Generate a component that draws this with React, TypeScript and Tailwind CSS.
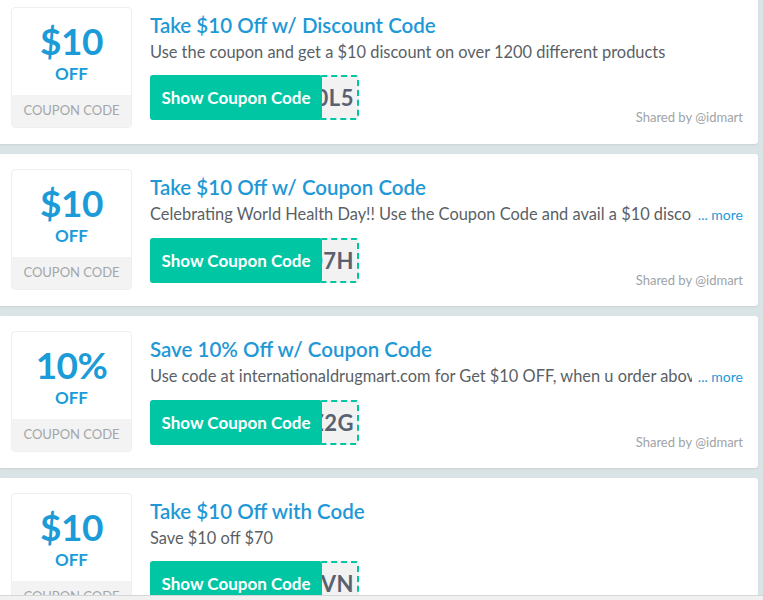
const coupons = [
  {
    value: "$10",
    title: "Take $10 Off w/ Discount Code",
    desc: "Use the coupon and get a $10 discount on over 1200 different products",
    more: false,
    code: "IDMART0L5",
  },
  {
    value: "$10",
    title: "Take $10 Off w/ Coupon Code",
    desc: "Celebrating World Health Day!! Use the Coupon Code and avail a $10 discount on all orders placed today",
    more: true,
    code: "HEALTH07H",
  },
  {
    value: "10%",
    title: "Save 10% Off w/ Coupon Code",
    desc: "Use code at internationaldrugmart.com for Get $10 OFF, when u order above $100 on any product",
    more: true,
    code: "IDM10Z2G",
  },
  {
    value: "$10",
    title: "Take $10 Off with Code",
    desc: "Save $10 off $70",
    more: false,
    code: "SAVE10ZVN",
  },
];

function CouponCard({ c }: { c: (typeof coupons)[number] }) {
  return (
    <div className="flex bg-white rounded-r-[3px] shadow-[0_1px_2px_rgba(0,0,0,0.08)] pl-[11px] pr-[15px] pt-[15px] pb-[16px]">
      {/* value badge */}
      <div className="w-[121px] h-[121px] shrink-0 border border-[#efefef] rounded-[4px] overflow-hidden flex flex-col">
        <div className="h-[87px] flex flex-col items-center pt-[14px] text-[#1b9bd8]">
          <span className="text-[37px] font-bold leading-[38px] tracking-[-0.5px]">{c.value}</span>
          <span className="text-[17px] font-bold leading-[20px] mt-[4px]">OFF</span>
        </div>
        <div className="flex-1 bg-[#f3f3f3] flex items-center justify-center text-[13px] text-[#a3a7aa]">
          COUPON CODE
        </div>
      </div>

      <div className="ml-[18px] flex-1 min-w-0 flex flex-col">
        <h2 className="text-[20.5px] font-semibold text-[#1f98d6] leading-[24px] mt-[6px]">{c.title}</h2>
        <div className="flex items-baseline mt-[4px] text-[16.4px] leading-[22px]">
          <span className="text-[#5a5f66] whitespace-nowrap overflow-hidden">{c.desc}</span>
          {c.more && (
            <span className="shrink-0 ml-[6px] text-[14px] text-[#1f98d6]">... more</span>
          )}
        </div>
        <div className="flex items-end justify-between mt-[12px]">
          <div className="relative w-[209px] h-[45px]">
            <div className="absolute inset-0 border-2 border-dashed border-[#00c6a4] rounded-[3px] bg-[#f2f2f2] flex items-center justify-end pr-[3px] overflow-hidden">
              <span className="text-[22px] font-bold text-[#596170] whitespace-nowrap tracking-[0.5px]">{c.code}</span>
            </div>
            <button className="absolute left-0 top-0 w-[172px] h-[45px] bg-[#00c6a4] rounded-[3px] text-white text-[17px] font-bold">
              Show Coupon Code
            </button>
          </div>
          <span className="text-[13px] text-[#9ea3a7] leading-[14px] mb-[-4px]">Shared by @idmart</span>
        </div>
      </div>
    </div>
  );
}

export default function App() {
  return (
    <div className="w-[763px] h-[600px] overflow-hidden bg-[#dae3e5] relative" style={{ fontFamily: "Lato, 'Noto Sans', sans-serif" }}>
      <div className="flex flex-col gap-[10px] mt-[-8px] pr-[5px]">
        {coupons.map((c, i) => (
          <CouponCard key={i} c={c} />
        ))}
      </div>
      <div className="absolute left-0 right-0 bottom-0 h-[5px] bg-[#f1f1f1] border-t border-[#d6d6d6]" />
    </div>
  );
}
